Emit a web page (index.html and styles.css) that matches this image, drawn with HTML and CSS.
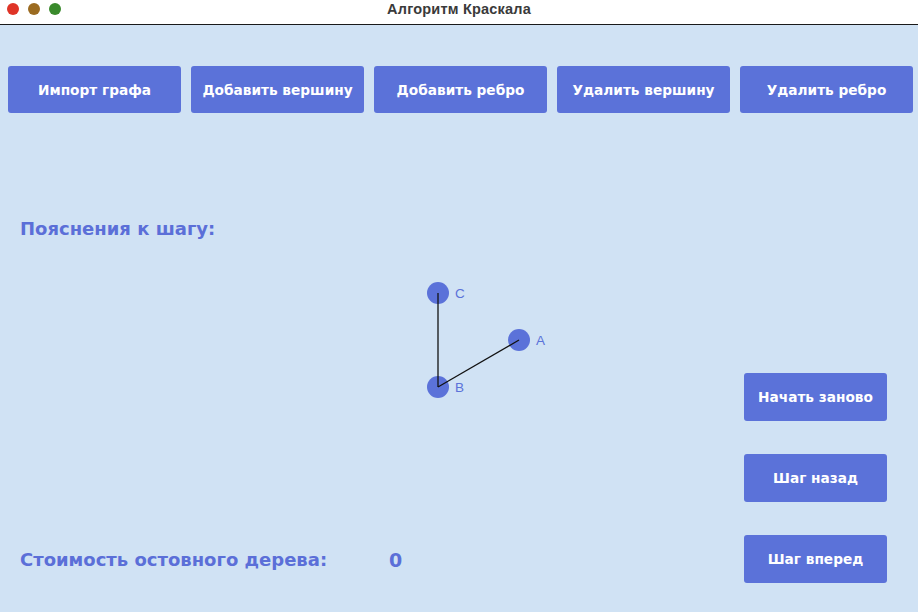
FILE: index.html
```html
<!DOCTYPE html>
<html lang="ru">
<head>
<meta charset="utf-8">
<title>Алгоритм Краскала</title>
<link rel="stylesheet" href="styles.css">
</head>
<body>
<div class="window">
  <div class="titlebar">
    <div class="lights">
      <span class="light red"></span>
      <span class="light yellow"></span>
      <span class="light green"></span>
    </div>
    <div class="title">Алгоритм Краскала</div>
  </div>
  <div class="content">
    <div class="toolbar">
      <button class="btn top">Импорт графа</button>
      <button class="btn top">Добавить вершину</button>
      <button class="btn top">Добавить ребро</button>
      <button class="btn top">Удалить вершину</button>
      <button class="btn top">Удалить ребро</button>
    </div>
    <div class="lower">
      <div class="left">
        <div class="label explain">Пояснения к шагу:</div>
        <div class="cost">
          <span class="label">Стоимость остовного дерева:</span>
          <span class="label value">0</span>
        </div>
      </div>
      <svg class="graph" width="918" height="499" viewBox="0 0 918 499">
        <circle cx="438" cy="180" r="11" fill="#5b72d9"/>
        <circle cx="519" cy="227" r="11" fill="#5b72d9"/>
        <circle cx="438" cy="274" r="11" fill="#5b72d9"/>
        <line x1="438" y1="180" x2="438" y2="274" stroke="#111" stroke-width="1.3"/>
        <line x1="438" y1="274" x2="519" y2="227" stroke="#111" stroke-width="1.3"/>
        <text x="455" y="185" class="node-label">C</text>
        <text x="536" y="232" class="node-label">A</text>
        <text x="455" y="279" class="node-label">B</text>
      </svg>
      <div class="right">
        <button class="btn side">Начать заново</button>
        <button class="btn side">Шаг назад</button>
        <button class="btn side">Шаг вперед</button>
      </div>
    </div>
  </div>
</div>
</body>
</html>
```

FILE: styles.css
```css
* { box-sizing: border-box; }
html, body { margin: 0; padding: 0; }
body {
  width: 918px;
  height: 612px;
  overflow: hidden;
  font-family: "Liberation Sans", Arial, sans-serif;
  background: #d0e2f4;
}
.window { width: 918px; height: 612px; display: flex; flex-direction: column; }
.titlebar {
  height: 25px;
  background: #ffffff;
  border-bottom: 1px solid #1a1a1a;
  position: relative;
  display: flex;
  align-items: center;
  justify-content: center;
  flex-shrink: 0;
}
.lights {
  position: absolute;
  left: 7px;
  top: 3px;
  display: flex;
  gap: 9px;
}
.light { width: 12px; height: 12px; border-radius: 50%; display: block; }
.red { background: #df3427; }
.yellow { background: #9b6b21; }
.green { background: #3a8a2c; }
.title {
  font-size: 14.5px;
  font-weight: bold;
  letter-spacing: 0.2px;
  color: #3a3a3a;
  margin-top: -6px;
}
.content { flex: 1; display: flex; flex-direction: column; }
.toolbar {
  display: flex;
  gap: 10px;
  padding: 41px 0 0 8px;
}
.btn {
  border: none;
  background: #5b72d9;
  color: #ffffff;
  font-family: "DejaVu Sans", "Liberation Sans", sans-serif;
  font-weight: bold;
  font-size: 13.7px;
  border-radius: 3px;
  padding: 0;
}
.btn.top { width: 173px; height: 47px; }
.lower { flex: 1; position: relative; display: flex; }
.left {
  flex: 1;
  display: flex;
  flex-direction: column;
  justify-content: space-between;
  padding: 105px 0 41px 20px;
}
.label {
  color: #5b6fd8;
  font-family: "DejaVu Sans", "Liberation Sans", sans-serif;
  font-weight: bold;
  font-size: 18px;
}
.cost { display: flex; }
.cost .label:first-child { width: 369px; }
.value { font-size: 19px; }
.graph { position: absolute; left: 0; top: 0; pointer-events: none; }
.node-label {
  font-family: "Liberation Sans", Arial, sans-serif;
  font-size: 13.5px;
  fill: #5b72d9;
}
.right {
  display: flex;
  flex-direction: column;
  justify-content: flex-end;
  gap: 33px;
  padding: 0 31px 29px 0;
}
.btn.side { width: 143px; height: 48px; }
```
